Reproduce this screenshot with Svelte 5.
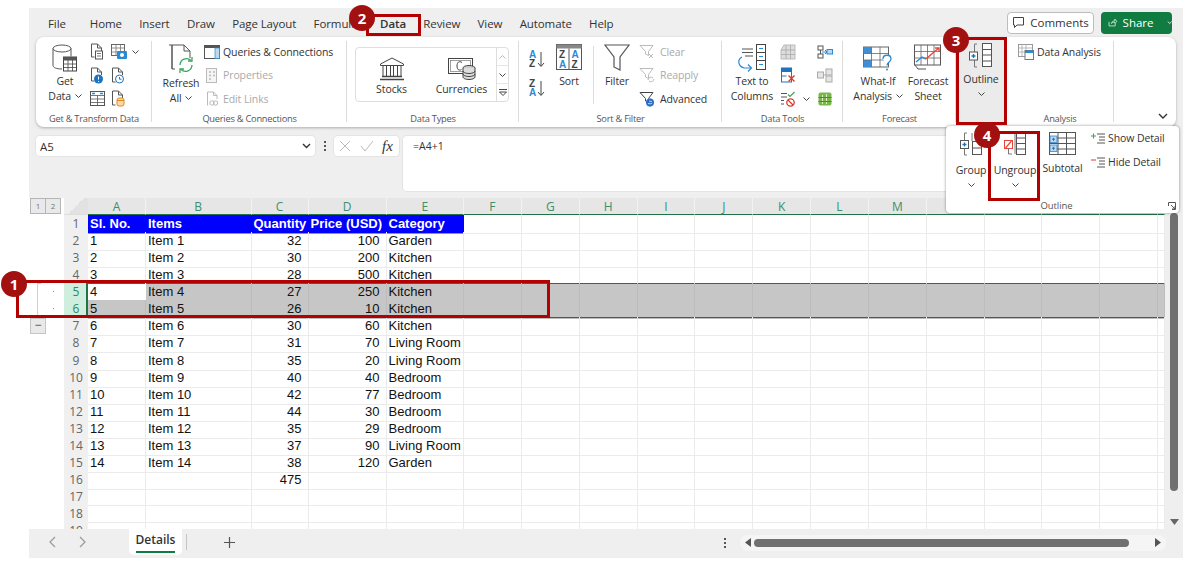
<script>
  const cols = 'ABCDEFGHIJKLMNOPQR'.split('');
  const data = [
    ['Sl. No.', 'Items', 'Quantity', 'Price (USD)', 'Category'],
    [1, 'Item 1', 32, 100, 'Garden'],
    [2, 'Item 2', 30, 200, 'Kitchen'],
    [3, 'Item 3', 28, 500, 'Kitchen'],
    [4, 'Item 4', 27, 250, 'Kitchen'],
    [5, 'Item 5', 26, 10, 'Kitchen'],
    [6, 'Item 6', 30, 60, 'Kitchen'],
    [7, 'Item 7', 31, 70, 'Living Room'],
    [8, 'Item 8', 35, 20, 'Living Room'],
    [9, 'Item 9', 40, 40, 'Bedroom'],
    [10, 'Item 10', 42, 77, 'Bedroom'],
    [11, 'Item 11', 44, 30, 'Bedroom'],
    [12, 'Item 12', 35, 29, 'Bedroom'],
    [13, 'Item 13', 37, 90, 'Living Room'],
    [14, 'Item 14', 38, 120, 'Garden'],
    ['', '', 475, '', ''],
    [], [], []
  ];
  const tabs = ['File', 'Home', 'Insert', 'Draw', 'Page Layout', 'Formulas', 'Data', 'Review', 'View', 'Automate', 'Help'];
</script>

<div class="win">
  <div class="tabbar">
    {#each tabs as t}
      <span class="tab" class:active={t === 'Data'}>{t}</span>
    {/each}
    <div class="actions">
      <button class="comments">
        <svg width="13" height="13" viewBox="0 0 13 13"><path d="M1.5 1.5h10v7.5H5L2.5 11.5V9h-1z" fill="none" stroke="#444"/></svg>
        Comments
      </button>
      <button class="share">
        <svg width="14" height="13" viewBox="0 0 14 13"><path d="M1.5 5.5v6h9V8M5 8c.5-3 3-4 5-4V1.5L13 5l-3 3V6C8 6 6 6.5 5 8z" fill="none" stroke="#fff"/></svg>
        Share
        <svg class="sharechev" width="8" height="5" viewBox="0 0 8 5"><path d="M1 1l3 3 3-3" fill="none" stroke="#fff" stroke-width="1.2"/></svg>
      </button>
    </div>
  </div>

  <div class="ribbon">
    <!-- Get & Transform -->
    <div class="grp g1">
      <div class="body">
        <div class="big w46">
          <svg class="ic28" width="26" height="28" viewBox="0 0 26 28">
            <ellipse cx="10" cy="4.5" rx="9" ry="3.5" fill="none" stroke="#555"/>
            <path d="M1 4.5v17c0 2 3.5 3.5 9 3.5M19 4.5v8" fill="none" stroke="#555"/>
            <rect x="11.5" y="13" width="13" height="14" fill="#fff" stroke="#444"/>
            <rect x="11.5" y="13" width="13" height="3.5" fill="#555"/>
            <path d="M11.5 20h13M11.5 23.5h13M16 16v11M20.500 16v11" stroke="#444" stroke-width=".8"/>
          </svg>
          <span>Get</span>
          <span>Data <svg class="chev" width="7" height="4" viewBox="0 0 7 4"><path d="M.5.5l3 3 3-3" fill="none" stroke="#444"/></svg></span>
        </div>
        <div class="smallgrid sg1">
          <svg width="14" height="17" viewBox="0 0 14 17"><path d="M1.500 1h6l4 4v3M1.500 1v13h3M7.500 1v4h4" fill="none" stroke="#555"/><rect x="5.500" y="8" width="7" height="8" fill="#fff" stroke="#555"/><path d="M7 10.500h4M7 13h4" stroke="#555" stroke-width=".8"/></svg>
          <span class="withchev">
            <svg width="17" height="16" viewBox="0 0 17 16"><rect x=".5" y=".5" width="13" height="11" fill="#fff" stroke="#666"/><path d="M.5 4h13M.5 8h13M5 .5v11M9.500 .5v11" stroke="#777" stroke-width=".8"/><rect x="6" y="7" width="10" height="8" rx="1" fill="#2a8ad4"/><circle cx="11" cy="11" r="2" fill="#fff"/></svg>
            <svg class="chev" width="7" height="4" viewBox="0 0 7 4"><path d="M.5.5l3 3 3-3" fill="none" stroke="#444"/></svg>
          </span>
          <svg width="14" height="17" viewBox="0 0 14 17"><path d="M1.500 1h6l4 4v3M1.500 1v13h3M7.500 1v4h4" fill="none" stroke="#555"/><circle cx="8.500" cy="12" r="4.500" fill="#1e73be"/><path d="M8.500 9.500v3M8.500 14v1" stroke="#fff"/></svg>
          <span class="withchev">
            <svg width="14" height="17" viewBox="0 0 14 17"><path d="M1.500 1h6l4 4v3M1.500 1v14h3M7.500 1v4h4" fill="none" stroke="#555"/><circle cx="8.500" cy="12" r="4" fill="#fff" stroke="#1e73be"/><path d="M8.500 10v2.200h2" fill="none" stroke="#1e73be"/></svg>
          </span>
          <svg width="15" height="15" viewBox="0 0 15 15"><rect x=".5" y=".5" width="14" height="14" fill="#fff" stroke="#555"/><path d="M.5 4.500h14M.5 8h14M.5 11.500h14M7.500 4.500v10" stroke="#555" stroke-width=".8"/><path d="M2 2.500h3M10 2.500h3" stroke="#2a8ad4" stroke-width="1.500"/></svg>
          <span class="withchev">
            <svg width="14" height="17" viewBox="0 0 14 17"><path d="M1.500 1h6l4 4v3M1.500 1v14h3M7.500 1v4h4" fill="none" stroke="#555"/><rect x="6" y="8" width="7" height="8" rx="2" fill="#fbd9a8" stroke="#e08a1e"/><path d="M6 10.500h7" stroke="#e08a1e"/></svg>
          </span>
        </div>
      </div>
      <div class="label">Get &amp; Transform Data</div>
    </div>

    <!-- Queries -->
    <div class="grp g2">
      <div class="body">
        <div class="big w46 refresh">
          <svg class="ic30" width="26" height="30" viewBox="0 0 26 30">
            <path d="M1 1h3v24h3" fill="none" stroke="#555"/>
            <path d="M4 1h12l6 6v7M16 1v6h6M4 1v24" fill="none" stroke="#555"/>
            <path d="M12 21a6.500 6.500 0 0 1 11-4.500M24 21a6.500 6.500 0 0 1-11 4.500" fill="none" stroke="#3da35d" stroke-width="1.300"/>
            <path d="M24 13v4h-4M12 29v-4h4" fill="none" stroke="#3da35d" stroke-width="1.300"/>
          </svg>
          <span>Refresh</span>
          <span>All <svg class="chev" width="7" height="4" viewBox="0 0 7 4"><path d="M.5.5l3 3 3-3" fill="none" stroke="#444"/></svg></span>
        </div>
        <div class="list">
          <div class="li">
            <svg width="16" height="14" viewBox="0 0 16 14"><rect x=".5" y=".5" width="15" height="13" fill="#fff" stroke="#555"/><rect x=".5" y=".5" width="15" height="2.500" fill="#555"/><rect x="11" y="3" width="4.500" height="10.500" fill="#bcd9f0" stroke="#2a8ad4" stroke-width=".7"/></svg>
            <span>Queries &amp; Connections</span>
          </div>
          <div class="li dis">
            <svg width="16" height="15" viewBox="0 0 16 15"><rect x="2.500" y=".5" width="10" height="14" fill="#f5f5f5" stroke="#bbb"/><path d="M5 4h2M9 4h2M5 7.500h2M9 7.500h2M5 11h2" stroke="#bbb" stroke-width="1.500"/></svg>
            <span>Properties</span>
          </div>
          <div class="li dis">
            <svg width="16" height="16" viewBox="0 0 16 16"><path d="M3.500 14.500V1h6l3.500 3.500V8M9.500 1v3.500H13" fill="none" stroke="#bbb"/><circle cx="8" cy="12" r="2.200" fill="none" stroke="#bbb"/><circle cx="11.500" cy="12" r="2.200" fill="none" stroke="#bbb"/></svg>
            <span>Edit Links</span>
          </div>
        </div>
      </div>
      <div class="label">Queries &amp; Connections</div>
    </div>

    <!-- Data Types -->
    <div class="grp g3">
      <div class="body">
        <div class="gallery">
          <div class="gitem">
            <svg width="26" height="24" viewBox="0 0 26 24">
              <path d="M13 1L1.500 7v1.500h23V7z" fill="none" stroke="#444"/>
              <path d="M4 8.500V19M7.500 8.500V19M11.500 8.500V19M14.500 8.500V19M18.500 8.500V19M22 8.500V19" stroke="#444"/>
              <path d="M3 19.500h20M1 22.500h24" stroke="#444" stroke-width="1.300"/>
            </svg>
            <span>Stocks</span>
          </div>
          <div class="gitem">
            <svg width="28" height="24" viewBox="0 0 28 24">
              <rect x=".5" y="1.500" width="24" height="15" fill="#fff" stroke="#444"/>
              <rect x="2.500" y="3.500" width="20" height="11" fill="none" stroke="#777" stroke-width=".7"/>
              <path d="M14 5.500c-3-2-5 0-5 3.500s2 5 4.500 3.500" fill="none" stroke="#444"/>
              <ellipse cx="21" cy="11" rx="6" ry="2.500" fill="#ccc" stroke="#444"/>
              <path d="M15 11v9c0 1.500 3 2.500 6 2.500s6-1 6-2.500v-9" fill="#ddd" stroke="#444"/>
              <path d="M15 14c0 1.500 3 2.500 6 2.500s6-1 6-2.500M15 17c0 1.500 3 2.500 6 2.500s6-1 6-2.500" fill="none" stroke="#444"/>
            </svg>
            <span>Currencies</span>
          </div>
          <div class="gscroll">
            <div><svg width="7" height="4" viewBox="0 0 7 4"><path d="M.5 3.500l3-3 3 3" fill="none" stroke="#bbb"/></svg></div>
            <div><svg width="7" height="4" viewBox="0 0 7 4"><path d="M.5.5l3 3 3-3" fill="none" stroke="#444"/></svg></div>
            <div><svg width="8" height="7" viewBox="0 0 8 7"><path d="M0 .5h8" stroke="#444"/><path d="M.5 3l3.500 3.500L7.500 3z" fill="none" stroke="#444"/></svg></div>
          </div>
        </div>
      </div>
      <div class="label">Data Types</div>
    </div>

    <!-- Sort & Filter -->
    <div class="grp g4">
      <div class="body">
        <div class="azcol">
          <svg width="16" height="18" viewBox="0 0 16 18"><text x="0" y="8" class="az blue">A</text><text x="0" y="17" class="az dark">Z</text><path d="M12 2v14M9 13l3 3.500 3-3.500" fill="none" stroke="#444"/></svg>
          <svg width="16" height="18" viewBox="0 0 16 18"><text x="0" y="8" class="az dark">Z</text><text x="0" y="17" class="az blue">A</text><path d="M12 2v14M9 13l3 3.500 3-3.500" fill="none" stroke="#444"/></svg>
        </div>
        <div class="big w28">
          <svg class="ic28" width="26" height="28" viewBox="0 0 26 28">
            <rect x=".5" y=".5" width="25" height="25" fill="#fff" stroke="#555"/>
            <rect x=".5" y=".5" width="25" height="4" fill="#888"/>
            <path d="M13 4.500v21" stroke="#555"/>
            <text x="3" y="14" class="az dark">Z</text><text x="3" y="24" class="az blue">A</text>
            <text x="15.500" y="14" class="az blue">A</text><text x="15.500" y="24" class="az dark">Z</text>
          </svg>
          <span>Sort</span>
        </div>
        <div class="vsep"></div>
        <div class="big w46">
          <svg class="ic28" width="26" height="28" viewBox="0 0 26 28"><path d="M1 1h24L16 13v13l-6-3V13z" fill="#fff" stroke="#555" stroke-width="1.200"/></svg>
          <span>Filter</span>
        </div>
        <div class="list l4">
          <div class="li dis">
            <svg width="16" height="16" viewBox="0 0 16 16"><path d="M1 1.500h13L9.500 7.500v4l-3-1.500V7.500z" fill="none" stroke="#bbb"/><path d="M10 10l4 4M14 10l-4 4" stroke="#bbb"/></svg>
            <span>Clear</span>
          </div>
          <div class="li dis">
            <svg width="16" height="16" viewBox="0 0 16 16"><path d="M1 1.500h13L9.500 7.500v4l-3-1.500V7.500z" fill="none" stroke="#bbb"/><path d="M9 13a3 3 0 0 1 5-2M15 12a3 3 0 0 1-5 2" fill="none" stroke="#bbb"/></svg>
            <span>Reapply</span>
          </div>
          <div class="li">
            <svg width="16" height="16" viewBox="0 0 16 16"><path d="M1 1.500h13L9.500 7.500v4l-3-1.500V7.500z" fill="none" stroke="#444"/><circle cx="11" cy="11.500" r="3" fill="none" stroke="#2a6fc4" stroke-width="2"/><path d="M11 7.500v8M7 11.500h8" stroke="#2a6fc4" stroke-width="1"/></svg>
            <span>Advanced</span>
          </div>
        </div>
      </div>
      <div class="label">Sort &amp; Filter</div>
    </div>

    <!-- Data Tools -->
    <div class="grp g5">
      <div class="body">
        <div class="big w48">
          <svg class="ic28" width="30" height="28" viewBox="0 0 30 28">
            <path d="M5 5h11M5 8.500h11M8 12h8" stroke="#555"/>
            <rect x="19.500" y=".5" width="9" height="25" fill="#fff" stroke="#444"/>
            <path d="M19.500 8.500h9M19.500 16.500h9" stroke="#444"/>
            <path d="M22 4.500h4M22 12.500h4M22 20.500h4" stroke="#2a8ad4" stroke-width="1.200"/>
            <path d="M5 13c-5 3-4 9 2 11h7M11 20.500l3.500 3.500-3.500 3.500" fill="none" stroke="#2a8ad4" stroke-width="1.200"/>
          </svg>
          <span>Text to</span>
          <span>Columns</span>
        </div>
        <div class="smallgrid sg5">
          <svg width="16" height="16" viewBox="0 0 16 16"><path d="M4 1h11v14H1V6z" fill="#ddd" stroke="#bbb"/><path d="M1 6h14M1 10.500h14M6 1v14M10.500 1v14" stroke="#aaa" stroke-width=".8"/></svg>
          <svg width="16" height="14" viewBox="0 0 16 14"><rect x="1" y="1" width="5" height="4" fill="none" stroke="#555"/><rect x="1" y="9" width="5" height="4" fill="none" stroke="#555"/><path d="M3.500 5v4" stroke="#555"/><rect x="10" y="4.500" width="5.500" height="4.500" fill="#bcd9f0" stroke="#2a8ad4"/><path d="M5 7h5M8 5l2 2-2 2" fill="none" stroke="#2a8ad4"/></svg>
          <svg width="16" height="16" viewBox="0 0 16 16"><rect x="1.500" y="1" width="10" height="14" fill="#fff" stroke="#1e73be"/><rect x="1.500" y="1" width="10" height="4" fill="#1e73be"/><path d="M1.500 9h5" stroke="#1e73be"/><path d="M8.500 8.500l6 6M14.500 8.500l-6 6" stroke="#d83b2a" stroke-width="1.400"/></svg>
          <svg width="16" height="15" viewBox="0 0 16 15"><rect x=".5" y="4" width="6" height="6" fill="#e6e6e6" stroke="#aaa"/><rect x="9" y="1" width="6" height="6" fill="#e6e6e6" stroke="#aaa"/><rect x="9" y="8" width="6" height="6" fill="#e6e6e6" stroke="#aaa"/><path d="M6.500 7h2.500" stroke="#aaa"/></svg>
          <span class="withchev wide">
            <svg width="16" height="16" viewBox="0 0 16 16"><path d="M1 2.500h6M1 6h6M1 9.500h3M1 13h3" stroke="#555"/><path d="M8 3.500l2 2 4.500-4.500" fill="none" stroke="#3da35d" stroke-width="1.200"/><circle cx="10.500" cy="11.500" r="3.700" fill="#fff" stroke="#d83b2a" stroke-width="1.300"/><path d="M8 9l5 5" stroke="#d83b2a" stroke-width="1.300"/></svg>
            <svg class="chev" width="7" height="4" viewBox="0 0 7 4"><path d="M.5.5l3 3 3-3" fill="none" stroke="#444"/></svg>
          </span>
          <svg width="16" height="16" viewBox="0 0 16 16"><rect x="1.500" y="1.500" width="13" height="13" rx="2" fill="#7ab648"/><path d="M5.500 4v9M9.500 3v10" stroke="#d7efc5"/><path d="M1.500 6.500h13M1.500 10.500h13" stroke="#3f8f2b"/></svg>
        </div>
      </div>
      <div class="label">Data Tools</div>
    </div>

    <!-- Forecast -->
    <div class="grp g6">
      <div class="body">
        <div class="big w50">
          <svg class="ic28" width="30" height="28" viewBox="0 0 30 28">
            <rect x=".5" y="3" width="25" height="20" fill="#fff" stroke="#666"/>
            <rect x=".5" y="3" width="8" height="6.500" fill="#3f8fd6"/><rect x=".5" y="16" width="8" height="7" fill="#3f8fd6"/>
            <path d="M8.500 3v20M17 3v20M.5 9.500h25M.5 16h25" stroke="#666" stroke-width=".8"/>
            <path d="M20 15c0-5 8-5 8 0 0 3-4 3-4 6.500" fill="#fff" stroke="#2a8ad4" stroke-width="1.300"/>
            <circle cx="24" cy="25.500" r="1" fill="#2a8ad4"/>
          </svg>
          <span>What-If</span>
          <span>Analysis <svg class="chev" width="7" height="4" viewBox="0 0 7 4"><path d="M.5.5l3 3 3-3" fill="none" stroke="#444"/></svg></span>
        </div>
        <div class="big w50">
          <svg class="ic28" width="28" height="28" viewBox="0 0 28 28">
            <rect x=".5" y="1" width="26" height="20" fill="#fff" stroke="#555"/>
            <path d="M7 1v20M13.500 1v20M20 1v20M.5 7.500h26M.5 14h26" stroke="#666" stroke-width=".8"/>
            <path d="M2 18l6-5 4 2" fill="none" stroke="#2a8ad4" stroke-width="1.400"/>
            <path d="M12 15l8-7 5-4M21 4h4v4" fill="none" stroke="#e8483a" stroke-width="1.400"/>
            <path d="M1 21l3 4h8" fill="none" stroke="#555"/>
          </svg>
          <span>Forecast</span>
          <span>Sheet</span>
        </div>
      </div>
      <div class="label">Forecast</div>
    </div>

    <!-- Outline -->
    <div class="grp g7">
      <div class="outlinebtn">
        <svg width="24" height="25" viewBox="0 0 24 25">
          <path d="M8 1H5.500v8M5.500 16v8H8" fill="none" stroke="#777"/>
          <rect x=".5" y="9" width="8" height="8" fill="#fff" stroke="#555"/>
          <path d="M2.500 13h4M4.500 11v4" stroke="#1e73be" stroke-width="1.400"/>
          <rect x="13.500" y=".5" width="9" height="23" fill="#fff" stroke="#555"/>
          <path d="M13.500 6.500h9M13.500 12h9M13.500 18h9" stroke="#555"/>
        </svg>
        <span>Outline</span>
        <svg class="ochev" width="7" height="4" viewBox="0 0 7 4"><path d="M.5.5l3 3 3-3" fill="none" stroke="#444"/></svg>
      </div>
    </div>

    <!-- Analysis -->
    <div class="grp g8">
      <div class="body">
        <div class="list">
          <div class="li">
            <svg width="16" height="16" viewBox="0 0 16 16"><rect x=".5" y=".5" width="14" height="12" fill="#fff" stroke="#999"/><path d="M.5 4h14M.5 8h14M4 .5v12M8 .5v12" stroke="#aaa" stroke-width=".8"/><rect x="7" y="6.500" width="8.500" height="9" fill="#fff" stroke="#777"/><rect x="7" y="6.500" width="8.500" height="2.500" fill="#2a8ad4"/></svg>
            <span>Data Analysis</span>
          </div>
        </div>
      </div>
      <div class="label">Analysis</div>
    </div>

    <div class="collapse">
      <svg width="10" height="6" viewBox="0 0 10 6"><path d="M1 1l4 4 4-4" fill="none" stroke="#333" stroke-width="1.400"/></svg>
    </div>
  </div>

  <div class="fbar">
    <div class="namebox"><span>A5</span>
      <svg width="9" height="6" viewBox="0 0 9 6"><path d="M1 1l3.500 3.500L8 1" fill="none" stroke="#333" stroke-width="1.400"/></svg>
    </div>
    <div class="fdots"><i></i><i></i><i></i></div>
    <div class="fxbox">
      <svg width="14" height="14" viewBox="0 0 14 14"><path d="M2 2l10 10M12 2L2 12" stroke="#bbb"/></svg>
      <svg width="14" height="14" viewBox="0 0 14 14"><path d="M1 7l4 5 8-10" fill="none" stroke="#bbb"/></svg>
      <span class="fx">fx</span>
    </div>
    <div class="formula">=A4+1</div>
  </div>

  <div class="sheet">
    <div class="gridwrap">
      <div class="row head">
        <div class="gut gbtns"><b>1</b><b>2</b></div>
        <div class="corner"></div>
        {#each cols as c}<div class="ch">{c}</div>{/each}
      </div>
      {#each data as r, i}
        {@const n = i + 1}
        {@const sel = n === 5 || n === 6}
        <div class="row" class:sel class:top={n === 5} class:bot={n === 6}>
          <div class="gut">
            {#if sel}
              <span class="bracket" class:first={n === 5}></span><span class="dot"></span>
            {/if}
            {#if n === 7}<span class="minus">−</span>{/if}
          </div>
          <div class="rh">{n}</div>
          {#each cols as c, j}
            <div class="cell"
              class:num={n > 1 && (j === 2 || j === 3)}
              class:hd={n === 1 && j < 5}
              class:active={n === 5 && j === 0}>{r[j] ?? ''}</div>
          {/each}
        </div>
      {/each}
    </div>
    <div class="vscroll">
      <div class="vthumb"></div>
      <svg class="vdown" width="9" height="6" viewBox="0 0 9 6"><path d="M0 0h9L4.500 6z" fill="#666"/></svg>
    </div>
  </div>

  <div class="bottom">
    <svg class="n1" width="7" height="12" viewBox="0 0 7 12"><path d="M6 1L1 6l5 5" fill="none" stroke="#999" stroke-width="1.200"/></svg>
    <svg class="n2" width="7" height="12" viewBox="0 0 7 12"><path d="M1 1l5 5-5 5" fill="none" stroke="#999" stroke-width="1.200"/></svg>
    <div class="sheettab"><span>Details</span></div>
    <div class="tsep"></div>
    <svg class="plus" width="11" height="11" viewBox="0 0 11 11"><path d="M5.500 0v11M0 5.500h11" stroke="#555" stroke-width="1.200"/></svg>
    <div class="bdots"><i></i><i></i><i></i></div>
    <div class="hscroll">
      <svg width="6" height="9" viewBox="0 0 6 9"><path d="M6 0v9L0 4.500z" fill="#555"/></svg>
      <div class="hthumb"></div>
      <svg width="6" height="9" viewBox="0 0 6 9"><path d="M0 0v9l6-4.500z" fill="#555"/></svg>
    </div>
  </div>
</div>

<!-- Dropdown panel -->
<div class="drop">
  <div class="dropbody">
    <div class="dbig d1">
      <svg width="24" height="24" viewBox="0 0 24 24">
        <path d="M8 1H5.500v8M5.500 16v7H8" fill="none" stroke="#777"/>
        <rect x="1.500" y="8.500" width="8" height="8" fill="#fff" stroke="#555"/>
        <path d="M3.500 12.500h4M5.500 10.500v4" stroke="#1e73be" stroke-width="1.400"/>
        <path d="M13 1v8" stroke="#777"/>
        <rect x="13.500" y="9.500" width="9" height="13" fill="#fff" stroke="#555"/>
        <path d="M13.500 16h9" stroke="#555"/>
      </svg>
      <span>Group</span>
      <svg class="dchev" width="7" height="4" viewBox="0 0 7 4"><path d="M.5.5l3 3 3-3" fill="none" stroke="#444"/></svg>
    </div>
    <div class="dbig d2">
      <svg width="24" height="24" viewBox="0 0 24 24">
        <rect x="1.500" y="8.500" width="8" height="8" fill="#fff" stroke="#e8483a"/>
        <path d="M2.500 16l6-7" stroke="#e8483a" stroke-width="1.200"/>
        <path d="M5.500 16.500v5.500H9" fill="none" stroke="#777"/>
        <path d="M12 1v21" stroke="#777"/>
        <rect x="13.500" y=".5" width="9" height="22" fill="#fff" stroke="#555"/>
        <path d="M13.500 6h9M13.500 11.500h9M13.500 17h9" stroke="#555"/>
      </svg>
      <span>Ungroup</span>
      <svg class="dchev" width="7" height="4" viewBox="0 0 7 4"><path d="M.5.5l3 3 3-3" fill="none" stroke="#444"/></svg>
    </div>
    <div class="dbig d3">
      <svg width="27" height="24" viewBox="0 0 27 24">
        <rect x=".5" y=".5" width="26" height="22" fill="#fff" stroke="#555"/>
        <path d="M9 .5v22M17.500 .5v22M.5 6h26M.5 11.500h26M.5 17h26" stroke="#555"/>
        <rect x="1" y="4" width="7" height="6.500" fill="#bcd9f0" stroke="#1e73be" stroke-width=".7"/>
        <rect x="1" y="13" width="7" height="6.500" fill="#bcd9f0" stroke="#1e73be" stroke-width=".7"/>
        <path d="M3 7.200h3M4.500 5.800v3M3 16.200h3M4.500 14.800v3" stroke="#1e73be"/>
      </svg>
      <span>Subtotal</span>
    </div>
    <div class="dlist">
      <div class="dli">
        <svg width="15" height="12" viewBox="0 0 15 12"><path d="M0 4h5M2.500 1.500v5" stroke="#3da35d" stroke-width="1.100"/><path d="M6 2h8M8 5h6M8 8h6M6 11h8" stroke="#555"/></svg>
        <span>Show Detail</span>
      </div>
      <div class="dli">
        <svg width="15" height="12" viewBox="0 0 15 12"><path d="M0 4h5" stroke="#e8483a" stroke-width="1.100"/><path d="M6 2h8M8 5h6M8 8h6M6 11h8" stroke="#555"/></svg>
        <span>Hide Detail</span>
      </div>
    </div>
  </div>
  <div class="droplabel">Outline
    <svg class="launcher" width="8" height="8" viewBox="0 0 8 8"><path d="M.5 4V.5H7.500v7H4M3 3l4 4M4 7h3V4" fill="none" stroke="#555"/></svg>
  </div>
</div>

<!-- Callouts -->
<div class="rect r1"></div>
<div class="rect r2"></div>
<div class="rect r3"></div>
<div class="rect r4"></div>
<div class="badge b-1">1</div>
<div class="badge b-2">2</div>
<div class="badge b-3">3</div>
<div class="badge b-4">4</div>

<style>
  :global(body) { margin: 0; background: #fff; }
  :global(#app) { position: relative; width: 1192px; height: 571px; overflow: hidden; font-family: "Open Sans", "Noto Sans", sans-serif; color: #333; }

  .win { margin: 8px 0 0 29px; width: 1154px; height: 550px; background: #efefef; display: flex; flex-direction: column; }

  .tabbar { height: 29px; display: flex; align-items: center; padding-left: 19px; gap: 17.3px; font-size: 11.5px; letter-spacing: -.1px; flex: none; }
  .tab { white-space: nowrap; padding-top: 2px; position: relative; }
  .tab:first-child { margin-right: 6.7px; }
  .tab.active { font-weight: 600; }
  .tab.active::after { content: ""; position: absolute; left: 0; right: 0; bottom: -4px; height: 2px; background: #107c41; }
  .actions { margin-left: auto; margin-right: 11px; display: flex; gap: 7px; }
  .actions button { font: inherit; height: 22px; border-radius: 4px; display: flex; align-items: center; padding: 0; }
  .comments { width: 87px; background: #fff; border: 1px solid #bdbdbd; color: #333; justify-content: center; gap: 5px; }
  .share { width: 71px; background: #107c41; border: 0; color: #fff; padding-left: 7px !important; gap: 5px; }
  .sharechev { margin-left: 8px; }

  .ribbon { flex: none; height: 90px; margin: 0 7px; background: #fff; border-radius: 8px; box-shadow: 0 1px 3px rgba(0,0,0,.28); display: flex; font-size: 10.5px; letter-spacing: -.1px; position: relative; }
  .grp { position: relative; display: flex; flex-direction: column; flex: none; }
  .grp::after { content: ""; position: absolute; right: 0; top: 4px; bottom: 5px; width: 1px; background: #dcdcdc; }
  .body { flex: 1; display: flex; padding-top: 3px; min-height: 0; }
  .label { height: 16px; line-height: 16px; text-align: center; font-size: 9.3px; color: #555; flex: none; letter-spacing: -.25px; }
  .g1 { width: 116px; } .g1 .body { padding-left: 6px; }
  .g2 { width: 195px; } .g2 .body { padding-left: 6px; }
  .g3 { width: 172px; } .g3 .body { padding-left: 8px; }
  .g4 { width: 203px; }
  .g5 { width: 121px; } .g5 .body { padding-left: 6px; }
  .g6 { width: 113px; } .g6 .body { padding-left: 10px; }
  .g7 { width: 50px; } .g7::after { display: none; }
  .g8 { width: 108px; } .g8 .body { padding-left: 12px; }

  .big { display: flex; flex-direction: column; align-items: center; padding-top: 4px; line-height: 15px; flex: none; white-space: nowrap; }
  .big .ic28 { height: 28px; margin-bottom: 2px; flex: none; }
  .big .ic30 { height: 30px; margin-bottom: 2px; flex: none; }
  .w46 { width: 46px; } .w28 { width: 28px; } .w48 { width: 48px; } .w50 { width: 50px; }
  .chev { vertical-align: 2px; margin-left: 1px; }

  .smallgrid { display: grid; align-items: center; grid-auto-rows: 23.5px; justify-items: center; }
  .sg1 { grid-template-columns: 18px 24px; column-gap: 3px; margin-left: 2px; justify-items: start; }
  .sg5 { grid-template-columns: 37px 16px; margin-left: 4px; justify-items: start; }
  .withchev { display: inline-flex; align-items: center; gap: 3px; }
  .withchev.wide { gap: 6px; }

  .list { display: grid; grid-auto-rows: 23.5px; align-items: center; }
  .li { display: flex; align-items: center; gap: 3px; white-space: nowrap; }
  .li.dis { color: #aaa; }
  .li svg { flex: none; }

  .gallery { width: 154px; height: 55px; box-sizing: border-box; border: 1px solid #dedede; border-radius: 4px; margin-top: 7px; display: flex; }
  .gitem { display: flex; flex-direction: column; align-items: center; padding-top: 9px; line-height: 15px; }
  .gitem:nth-child(1) { width: 71px; } .gitem:nth-child(2) { width: 69px; }
  .gitem svg { height: 24px; margin-bottom: 1px; }
  .gscroll { flex: 1; border-left: 1px solid #dedede; display: flex; flex-direction: column; }
  .gscroll div { flex: 1; display: flex; align-items: center; justify-content: center; border-bottom: 1px solid #e6e6e6; }
  .gscroll div:last-child { border-bottom: 0; }

  .azcol { width: 36px; flex: none; display: flex; flex-direction: column; align-items: center; gap: 11px; padding-top: 10px; }
  .az { font: 700 10px "Liberation Sans", sans-serif; }
  .blue { fill: #2a8ad4; } .dark { fill: #444; }
  .vsep { width: 1px; height: 58px; background: #dcdcdc; margin: 6px 0 0 10px; flex: none; }
  .l4 .li { gap: 5px; }
  .l4 .li svg { margin-left: -1px; }

  .outlinebtn { margin: 3px 1px 5px; flex: 1; background: #ebebeb; display: flex; flex-direction: column; align-items: center; padding-top: 3px; line-height: 15px; }
  .outlinebtn svg:first-child { height: 25px; margin-bottom: 4px; }
  .ochev { margin-top: 5px; }

  .collapse { position: absolute; right: 8px; bottom: 8px; line-height: 0; }

  .fbar { flex: none; height: 71px; box-sizing: border-box; padding: 9px 7px 7px; display: flex; align-items: flex-start; }
  .namebox { width: 279px; height: 20px; box-sizing: border-box; background: #fff; border-radius: 4px; display: flex; align-items: center; justify-content: space-between; padding: 0 4px; font-size: 11.5px; box-shadow: 0 0 0 1px #e4e4e4; }
  .fdots { width: 19px; height: 20px; display: flex; flex-direction: column; align-items: center; justify-content: center; gap: 2px; }
  .fdots i, .bdots i { width: 2px; height: 2px; background: #555; display: block; }
  .fxbox { width: 65px; height: 20px; box-sizing: border-box; background: #fff; border-radius: 4px; display: flex; align-items: center; padding: 0 4px; gap: 8px; box-shadow: 0 0 0 1px #e4e4e4; }
  .fx { font: italic 15px "Liberation Serif", serif; color: #333; }
  .formula { margin-left: 4px; flex: 1; height: 55px; background: #fff; border-radius: 4px; box-sizing: border-box; padding: 3px 10px; font-size: 10.5px; box-shadow: 0 0 0 1px #e4e4e4; }

  .sheet { flex: none; height: 331px; display: flex; }
  .gridwrap { width: 1136px; background: #fff; overflow: hidden; font: 13px "Liberation Sans", sans-serif; color: #111; }
  .row { display: grid; grid-template-columns: 35px 24px 58px 105.5px 57px 78px 77.5px repeat(12, 57.85px) 7px; height: 17.07px; }
  .row.head { height: 17px; }
  .gut { position: relative; background: #fff; }
  .gbtns { display: flex; padding-left: 1px; }
  .gbtns b { width: 16px; height: 16px; box-sizing: border-box; background: #e9e9e9; border: 1px solid #b5b5b5; font: 8px/14px "Open Sans", sans-serif; color: #777; text-align: center; }
  .gbtns b + b { margin-left: -1px; }
  .corner { background: linear-gradient(135deg, #efefef 50%, #e2e2e2 50%); border-bottom: 1px solid #ddd; box-sizing: border-box; }
  .ch { background: #e6e6e6; border-right: 1px solid #f2f2f2; border-bottom: 1px solid #217346; box-sizing: border-box; text-align: center; color: #3d8f6b; font-size: 12px; line-height: 17px; font-family: "Open Sans", sans-serif; overflow: hidden; }
  .rh { background: #f0f0f0; border-bottom: 1px solid #dedede; box-sizing: border-box; text-align: center; font: 12px/17px "Open Sans", sans-serif; color: #666; }
  .cell { border-right: 1px solid #ebebeb; border-bottom: 1px solid #ebebeb; box-sizing: border-box; padding: 0 2px; line-height: 18px; white-space: nowrap; overflow: visible; }
  .cell.num { text-align: right; padding-right: 6px; }
  .cell.hd { background: #0000ff; color: #fff; font-weight: 700; border-color: #0000ff; border-bottom-color: #8a8af0; }
  .sel .cell { background: #c6c6c6; border-color: #bcbcbc; }
  .sel .cell.active { background: #fff; border-color: #fff; }
  .sel .rh { background: #cfeedd; color: #2b8a5f; box-shadow: inset -2px 0 0 #217346; }
  .top .cell { box-shadow: inset 0 1px 0 #217346; }
  .bot .cell { box-shadow: inset 0 -1px 0 #217346; }
  .bracket { position: absolute; left: 8px; top: 0; bottom: 0; width: 3px; border-left: 1px solid #cfcfcf; }
  .bracket.first { border-top: 1px solid #cfcfcf; }
  .dot { position: absolute; left: 24px; top: 8px; width: 1px; height: 1px; background: #999; }
  .minus { position: absolute; left: 1px; top: 1px; width: 16px; height: 16px; box-sizing: border-box; border: 1px solid #c5c5c5; background: #e9e9e9; text-align: center; font: 12px/13px "Liberation Sans", sans-serif; color: #555; z-index: 1; }

  .vscroll { flex: 1; position: relative; display: flex; flex-direction: column; align-items: center; }
  .vthumb { width: 8px; margin-top: 15px; height: 278px; background: #707070; border-radius: 4px; flex: none; }
  .vdown { margin-top: auto; margin-bottom: 4px; }

  .bottom { flex: 1; display: flex; align-items: center; font-size: 12px; }
  .bottom > svg { flex: none; }
  .n1 { margin: 0 0 4px 20px; } .n2 { margin: 0 0 4px 23px; }
  .sheettab { margin-left: 43px; width: 53px; height: 26px; align-self: flex-start; background: #fff; border-radius: 0 0 5px 5px; display: flex; justify-content: center; box-sizing: border-box; flex: none; }
  .sheettab span { height: 22px; line-height: 21px; border-bottom: 2px solid #107c41; font-weight: 600; color: #333; }
  .tsep { width: 1px; height: 16px; background: #c5c5c5; margin: 0 0 4px 4px; flex: none; }
  .plus { margin: 0 0 3px 37px; }
  .bdots { margin: 0 0 2px 489px; display: flex; flex-direction: column; gap: 2px; width: 3px; flex: none; }
  .hscroll { margin: 0 0 2px 13px; width: 426px; height: 16px; box-sizing: border-box; background: #f5f5f5; border-radius: 8px; display: flex; align-items: center; padding: 0 5px; flex: none; }
  .hthumb { width: 375px; height: 8px; background: #707070; border-radius: 4px; margin: 0 26px 0 3px; flex: none; }

  .drop { position: absolute; left: 946px; top: 126px; width: 233px; height: 87px; background: #fff; border-radius: 4px; box-shadow: 0 0 3px rgba(0,0,0,.45); display: flex; flex-direction: column; font-size: 10.5px; letter-spacing: -.1px; }
  .dropbody { flex: 1; display: flex; position: relative; }
  .dbig { display: flex; flex-direction: column; align-items: center; line-height: 15px; padding-top: 6px; flex: none; white-space: nowrap; }
  .dbig svg:first-child { height: 24px; margin-bottom: 7px; }
  .dchev { margin-top: 5px; }
  .d1 { width: 50px; } .d2 { width: 38px; } .d3 { width: 57px; }
  .d3 svg:first-child { margin-bottom: 5px; }
  .dlist { display: grid; grid-auto-rows: 24px; align-items: center; align-self: flex-start; }
  .dli { display: flex; align-items: center; gap: 2px; white-space: nowrap; }
  .droplabel { height: 16px; line-height: 17px; text-align: center; font-size: 9.5px; color: #555; position: relative; letter-spacing: -.1px; padding-right: 12px; }
  .launcher { position: absolute; right: 3px; bottom: 3px; }

  .rect { position: absolute; box-sizing: border-box; border: 3px solid #b30000; }
  .r1 { left: 16px; top: 280px; width: 534px; height: 38px; }
  .r2 { left: 366px; top: 14px; width: 55px; height: 22px; }
  .r3 { left: 956px; top: 37px; width: 51px; height: 88px; }
  .r4 { left: 988px; top: 131px; width: 52px; height: 70px; }
  .badge { position: absolute; width: 26px; height: 26px; border-radius: 50%; background: #a31010; color: #fff; font: 700 15px/26px "Open Sans", sans-serif; text-align: center; }
  .b-1 { left: 1px; top: 271px; }
  .b-2 { left: 349px; top: 5px; }
  .b-3 { left: 943px; top: 27px; }
  .b-4 { left: 974px; top: 122px; }
</style>
